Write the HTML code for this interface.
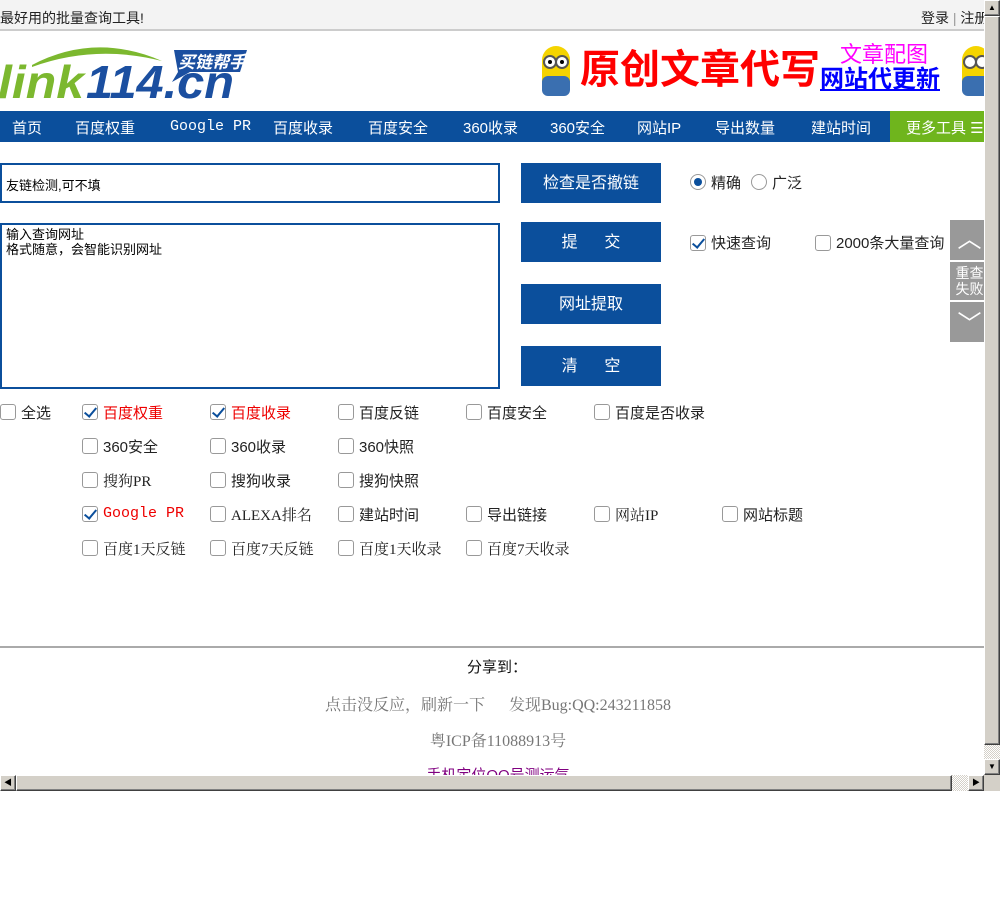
<!DOCTYPE html>
<html><head><meta charset="utf-8"><style>
*{margin:0;padding:0;box-sizing:border-box}
body{width:1000px;height:909px;background:#fff;font-family:"Liberation Sans","Noto Sans CJK SC","WenQuanYi Zen Hei",sans-serif;position:relative;overflow:hidden}
.vp{position:absolute;left:0;top:0;width:984px;height:775px;overflow:hidden}
.a{position:absolute;white-space:nowrap}
.top{left:0;top:0;width:984px;height:31px;background:#f3f3f3;border-bottom:2px solid #ccc;font-size:14px;color:#222}
.nav{left:0;top:111px;width:984px;height:31px;background:#0b4f9c;color:#fff;font-size:15px}
.nav span{position:absolute;top:6px}
.btn{position:absolute;left:521px;width:140px;height:40px;background:#0b4f9c;color:#fff;font-size:16px;text-align:center;line-height:42px}
.cb{position:absolute;width:16px;height:16px;border:1px solid #999;border-radius:3px;background:#fff}
.cb.on::after{content:"";position:absolute;left:4px;top:0px;width:5px;height:10px;border:solid #0b4f9c;border-width:0 2.5px 2.5px 0;transform:rotate(40deg)}
.lb{position:absolute;font-size:15px;color:#222}
.sf{font-family:"Liberation Serif","Noto Serif CJK SC",serif}
.red{color:#e00}
.fl{position:absolute;left:950px;width:39px;background:#999;color:#fff;text-align:center}
.ft{position:absolute;left:0;width:984px;text-align:center;font-size:15px}
.sb{position:absolute;background:#d4d0c8}
.bv{position:absolute;background:#d4d0c8;border:1px solid;border-color:#fff #404040 #404040 #fff;box-shadow:inset -1px -1px #808080}
.chk{background-image:repeating-conic-gradient(#fff 0 25%,#d4d0c8 0 50%);background-size:2px 2px}
</style></head><body>
<div class="vp">
<div class="a top"><span class="a" style="left:0;top:8px">最好用的批量查询工具!</span><span class="a" style="left:921px;top:8px">登录 <span style="color:#999">|</span> 注册</span></div>
<svg class="a" style="left:0;top:40px" width="250" height="62" viewBox="0 0 250 62">
<path d="M32 25 Q95 -8 162 21 Q95 4 32 27Z" fill="#7cb82f"/>
<text x="-2" y="58" font-family="Liberation Sans" font-weight="bold" font-style="italic" font-size="46" fill="#7cb82f" textLength="86" lengthAdjust="spacingAndGlyphs">link</text>
<text x="86" y="58" font-family="Liberation Sans" font-weight="bold" font-style="italic" font-size="46" fill="#1b4fa0" textLength="148" lengthAdjust="spacingAndGlyphs">114.cn</text>
<path d="M174 10 L247 10 L240 32 L190 32 L172 42 L178 32 Z" fill="#1b4fa0"/>
<text x="178" y="28" font-family="Noto Sans CJK SC" font-weight="bold" font-style="italic" font-size="17" fill="#fff">买链帮手</text>
</svg>
<svg class="a" style="left:538px;top:42px" width="36" height="58"><rect x="4" y="4" width="28" height="50" rx="14" fill="#f5d400"/><rect x="4" y="34" width="28" height="20" rx="6" fill="#3a6fb0"/><circle cx="12" cy="20" r="6" fill="#fff" stroke="#555" stroke-width="2"/><circle cx="24" cy="20" r="6" fill="#fff" stroke="#555" stroke-width="2"/><circle cx="12" cy="20" r="2"/><circle cx="24" cy="20" r="2"/></svg>
<div class="a" style="left:580px;top:45px;font-size:40px;color:#f00;font-weight:bold;line-height:50px">原创文章代写</div>
<div class="a" style="left:840px;top:42px;font-size:22px;color:#f0f;line-height:26px">文章配图</div>
<div class="a" style="left:820px;top:66px;font-size:24px;color:#00f;font-weight:bold;line-height:28px;text-decoration:underline">网站代更新</div>
<svg class="a" style="left:958px;top:42px" width="36" height="58"><rect x="4" y="4" width="28" height="50" rx="14" fill="#f5d400"/><rect x="4" y="34" width="28" height="20" rx="6" fill="#3a6fb0"/><circle cx="12" cy="20" r="6" fill="#fff" stroke="#555" stroke-width="2"/><circle cx="24" cy="20" r="6" fill="#fff" stroke="#555" stroke-width="2"/></svg>
<div class="a nav">
<span style="left:12px">首页</span><span style="left:75px">百度权重</span><span style="left:170px;font-family:'Liberation Mono',monospace;font-size:15px;top:7px">Google PR</span><span style="left:273px">百度收录</span><span style="left:368px">百度安全</span><span style="left:463px">360收录</span><span style="left:550px">360安全</span><span style="left:637px">网站IP</span><span style="left:715px">导出数量</span><span style="left:811px">建站时间</span>
<div class="a" style="left:890px;top:0;width:100px;height:31px;background:#6fb51d"><span style="left:16px">更多工具 ☰</span></div>
</div>
<div class="a" style="left:0;top:163px;width:500px;height:40px;border:2px solid #0b4f9c;font-size:13px;padding:10px 4px;color:#000">友链检测,可不填</div>
<div class="a" style="left:0;top:223px;width:500px;height:166px;border:2px solid #0b4f9c;font-size:13px;padding:2px 4px;line-height:15px;color:#000;white-space:normal">输入查询网址<br>格式随意，会智能识别网址</div>
<div class="btn" style="top:163px">检查是否撤链</div>
<div class="btn" style="top:222px">提&nbsp;&nbsp;&nbsp;&nbsp;&nbsp;&nbsp;交</div>
<div class="btn" style="top:284px">网址提取</div>
<div class="btn" style="top:346px">清&nbsp;&nbsp;&nbsp;&nbsp;&nbsp;&nbsp;空</div>
<div class="a" style="left:690px;top:174px;width:16px;height:16px;border:1px solid #999;border-radius:50%"><div style="margin:3px;width:8px;height:8px;border-radius:50%;background:#0b4f9c"></div></div>
<span class="lb" style="left:711px;top:172px">精确</span>
<div class="a" style="left:751px;top:174px;width:16px;height:16px;border:1px solid #999;border-radius:50%"></div>
<span class="lb" style="left:772px;top:172px">广泛</span>
<div class="cb on" style="left:690px;top:235px"></div><span class="lb" style="left:711px;top:232px">快速查询</span>
<div class="cb" style="left:815px;top:235px"></div><span class="lb" style="left:836px;top:232px">2000条大量查询</span>
<div class="fl" style="top:220px;height:40px;font-size:24px;line-height:40px">︿</div>
<div class="fl" style="top:262px;height:38px;font-size:14px;line-height:16px;padding-top:3px">重查<br>失败</div>
<div class="fl" style="top:302px;height:40px;font-size:24px;line-height:46px">﹀</div>
<div class="cb" style="left:0;top:404px"></div><span class="lb" style="left:21px;top:402px">全选</span>
<div class="cb on" style="left:82px;top:404px"></div><span class="lb red" style="left:103px;top:402px">百度权重</span>
<div class="cb on" style="left:210px;top:404px"></div><span class="lb red" style="left:231px;top:402px">百度收录</span>
<div class="cb" style="left:338px;top:404px"></div><span class="lb" style="left:359px;top:402px">百度反链</span>
<div class="cb" style="left:466px;top:404px"></div><span class="lb" style="left:487px;top:402px">百度安全</span>
<div class="cb" style="left:594px;top:404px"></div><span class="lb" style="left:615px;top:402px">百度是否收录</span>
<div class="cb" style="left:82px;top:438px"></div><span class="lb" style="left:103px;top:436px">360安全</span>
<div class="cb" style="left:210px;top:438px"></div><span class="lb" style="left:231px;top:436px">360收录</span>
<div class="cb" style="left:338px;top:438px"></div><span class="lb" style="left:359px;top:436px">360快照</span>
<div class="cb" style="left:82px;top:472px"></div><span class="lb sf" style="left:103px;top:470px">搜狗PR</span>
<div class="cb" style="left:210px;top:472px"></div><span class="lb" style="left:231px;top:470px">搜狗收录</span>
<div class="cb" style="left:338px;top:472px"></div><span class="lb" style="left:359px;top:470px">搜狗快照</span>
<div class="cb on" style="left:82px;top:506px"></div><span class="lb red" style="left:103px;top:505px;font-family:'Liberation Mono',monospace;font-size:15px">Google PR</span>
<div class="cb" style="left:210px;top:506px"></div><span class="lb sf" style="left:231px;top:504px">ALEXA排名</span>
<div class="cb" style="left:338px;top:506px"></div><span class="lb" style="left:359px;top:504px">建站时间</span>
<div class="cb" style="left:466px;top:506px"></div><span class="lb" style="left:487px;top:504px">导出链接</span>
<div class="cb" style="left:594px;top:506px"></div><span class="lb sf" style="left:615px;top:504px">网站IP</span>
<div class="cb" style="left:722px;top:506px"></div><span class="lb" style="left:743px;top:504px">网站标题</span>
<div class="cb" style="left:82px;top:540px"></div><span class="lb sf" style="left:103px;top:538px">百度1天反链</span>
<div class="cb" style="left:210px;top:540px"></div><span class="lb sf" style="left:231px;top:538px">百度7天反链</span>
<div class="cb" style="left:338px;top:540px"></div><span class="lb sf" style="left:359px;top:538px">百度1天收录</span>
<div class="cb" style="left:466px;top:540px"></div><span class="lb sf" style="left:487px;top:538px">百度7天收录</span>
<div class="a" style="left:0;top:646px;width:984px;height:2px;background:#aaa"></div>
<div class="ft" style="top:656px;color:#111;padding-left:10px">分享到：</div>
<div class="ft sf" style="top:692px;color:#777;padding-left:12px;font-size:16px">点击没反应，刷新一下&nbsp;&nbsp;&nbsp;&nbsp;&nbsp;&nbsp;发现Bug:QQ:243211858</div>
<div class="ft sf" style="top:728px;color:#777;padding-left:12px;font-size:16px">粤ICP备11088913号</div>
<div class="ft" style="top:764px;color:#800080;padding-left:12px">手机定位QQ号测运气</div>
</div>
<div class="sb chk" style="left:984px;top:0;width:16px;height:775px"></div>
<div class="bv" style="left:984px;top:0;width:16px;height:16px;font-size:8px;text-align:center;line-height:14px">▲</div>
<div class="bv" style="left:984px;top:16px;width:16px;height:729px"></div>
<div class="bv" style="left:984px;top:759px;width:16px;height:16px;font-size:8px;text-align:center;line-height:14px">▼</div>
<div class="sb chk" style="left:0;top:775px;width:984px;height:16px"></div>
<div class="bv" style="left:0;top:775px;width:16px;height:16px;font-size:8px;text-align:center;line-height:14px">◀</div>
<div class="bv" style="left:16px;top:775px;width:936px;height:16px"></div>
<div class="bv" style="left:968px;top:775px;width:16px;height:16px;font-size:8px;text-align:center;line-height:14px">▶</div>
<div class="sb" style="left:984px;top:775px;width:16px;height:16px"></div>
</body></html>
